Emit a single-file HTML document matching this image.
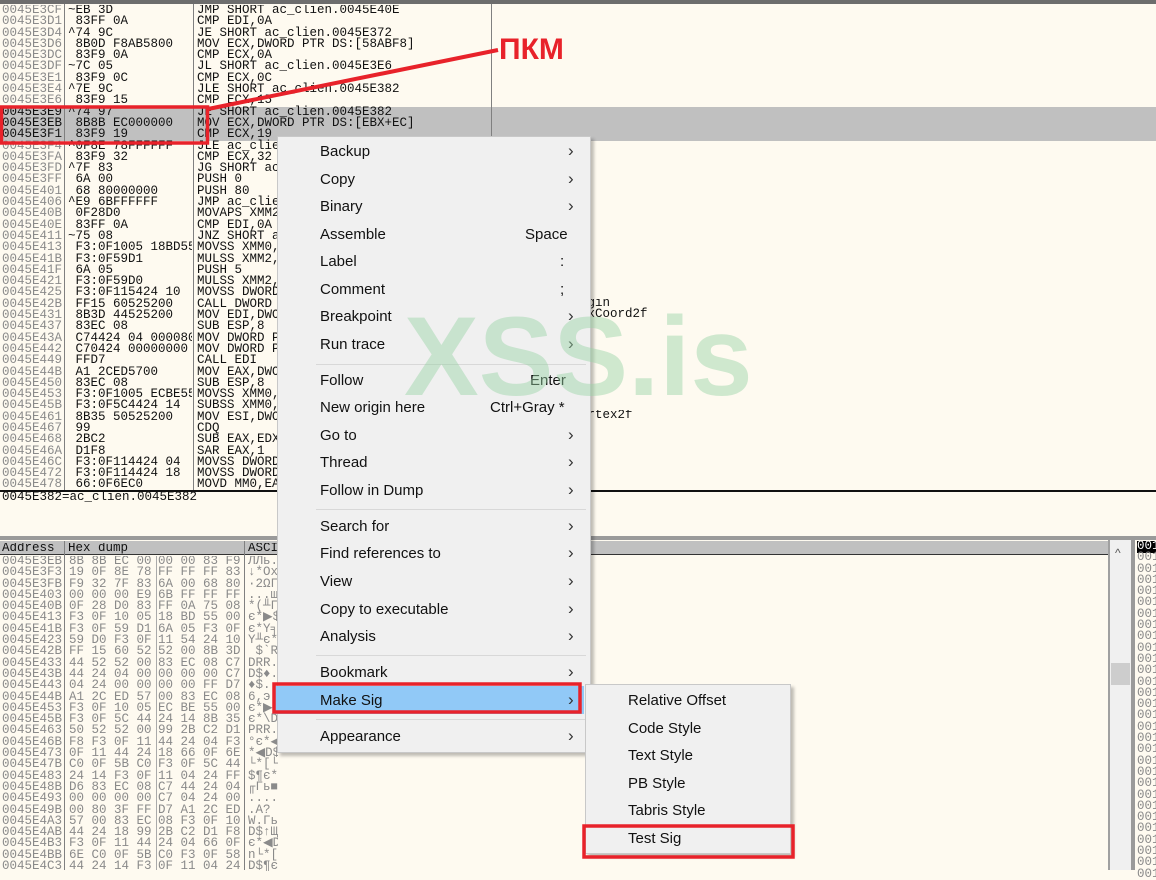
<!DOCTYPE html>
<html><head><meta charset="utf-8"><style>
*{margin:0;padding:0;box-sizing:border-box}
body{width:1156px;height:870px;overflow:hidden;background:#fefaf0;position:relative;font-family:"Liberation Sans",sans-serif}
.a{position:absolute}
.m{font-family:"Liberation Mono",monospace;font-size:12.5px;letter-spacing:0;line-height:11.3px;white-space:pre;overflow:hidden}
.g{color:#8a8a8a}
.k{color:#111}
.vl{position:absolute;width:1px;background:#808080}
.menu{position:absolute;background:#f0f0f0;border:1px solid #c8c8c8;box-shadow:3px 3px 3px rgba(0,0,0,.25)}
.it{position:absolute;left:42px;font-size:15px;color:#111;line-height:18px}
.ar{position:absolute;font-size:17px;color:#333;line-height:18px}
.sep{position:absolute;left:38px;right:4px;height:1px;background:#d8d8d8}
</style></head><body>
<div class="a" style="left:0;top:0;width:1156px;height:4px;background:#6d6d6d"></div>
<div class="a" style="left:0;top:107px;width:1156px;height:34px;background:#c0c0c0"></div>
<div class="vl" style="left:64px;top:4px;height:487px"></div>
<div class="vl" style="left:193px;top:4px;height:487px"></div>
<div class="vl" style="left:491px;top:4px;height:487px"></div>
<div class="a m g" style="left:2px;top:5px;width:62px">0045E3CF
0045E3D1
0045E3D4
0045E3D6
0045E3DC
0045E3DF
0045E3E1
0045E3E4
0045E3E6
<span class="k">0045E3E9
0045E3EB
0045E3F1</span>
0045E3F4
0045E3FA
0045E3FD
0045E3FF
0045E401
0045E406
0045E40B
0045E40E
0045E411
0045E413
0045E41B
0045E41F
0045E421
0045E425
0045E42B
0045E431
0045E437
0045E43A
0045E442
0045E449
0045E44B
0045E450
0045E453
0045E45B
0045E461
0045E467
0045E468
0045E46A
0045E46C
0045E472
0045E478</div>
<div class="a m k" style="left:68px;top:5px;width:124px">~EB 3D
 83FF 0A
^74 9C
 8B0D F8AB5800
 83F9 0A
~7C 05
 83F9 0C
^7E 9C
 83F9 15
^74 97
 8B8B EC000000
 83F9 19
^0F8E 78FFFFFF
 83F9 32
^7F 83
 6A 00
 68 80000000
^E9 6BFFFFFF
 0F28D0
 83FF 0A
~75 08
 F3:0F1005 18BD5500
 F3:0F59D1
 6A 05
 F3:0F59D0
 F3:0F115424 10
 FF15 60525200
 8B3D 44525200
 83EC 08
 C74424 04 0000803F
 C70424 00000000
 FFD7
 A1 2CED5700
 83EC 08
 F3:0F1005 ECBE5500
 F3:0F5C4424 14
 8B35 50525200
 99
 2BC2
 D1F8
 F3:0F114424 04
 F3:0F114424 18
 66:0F6EC0</div>
<div class="a m k" style="left:197px;top:5px;width:292px">JMP SHORT ac_clien.0045E40E
CMP EDI,0A
JE SHORT ac_clien.0045E372
MOV ECX,DWORD PTR DS:[58ABF8]
CMP ECX,0A
JL SHORT ac_clien.0045E3E6
CMP ECX,0C
JLE SHORT ac_clien.0045E382
CMP ECX,15
JE SHORT ac_clien.0045E382
MOV ECX,DWORD PTR DS:[EBX+EC]
CMP ECX,19
JLE ac_clien.0045E382
CMP ECX,32
JG SHORT ac_clien.0045E406
PUSH 0
PUSH 80
JMP ac_clien.0045E376
MOVAPS XMM2,XMM0
CMP EDI,0A
JNZ SHORT ac_clien.0045E41B
MOVSS XMM0,DWORD PTR DS:[55BD18]
MULSS XMM2,XMM1
PUSH 5
MULSS XMM2,XMM0
MOVSS DWORD PTR SS:[ESP+10],XMM2
CALL DWORD PTR DS:[&lt;&amp;OPENGL32.glBegin&gt;]
MOV EDI,DWORD PTR DS:[&lt;&amp;OPENGL32.glTexCoord2f&gt;]
SUB ESP,8
MOV DWORD PTR SS:[ESP+4],3F800000
MOV DWORD PTR SS:[ESP],0
CALL EDI
MOV EAX,DWORD PTR DS:[57ED2C]
SUB ESP,8
MOVSS XMM0,DWORD PTR DS:[55BEEC]
SUBSS XMM0,DWORD PTR SS:[ESP+14]
MOV ESI,DWORD PTR DS:[&lt;&amp;OPENGL32.glVertex2f&gt;]
CDQ
SUB EAX,EDX
SAR EAX,1
MOVSS DWORD PTR SS:[ESP+4],XMM0
MOVSS DWORD PTR SS:[ESP+18],XMM0
MOVD MM0,EAX</div>
<div class="a m k" style="left:580px;top:298px">egin
exCoord2f</div>
<div class="a m k" style="left:580px;top:410px">ertex2f</div>
<div class="a" style="left:0;top:490px;width:1156px;height:2px;background:#111"></div>
<div class="a m k" style="left:2px;top:492px">0045E382=ac_clien.0045E382</div>
<div class="a" style="left:0;top:536px;width:1156px;height:4px;background:#9a9a9a"></div>
<div class="a" style="left:0;top:541px;width:1108px;height:14px;background:#c0c0c0;border-bottom:1px solid #333"></div>
<div class="a m k" style="left:2px;top:543px">Address</div>
<div class="a m k" style="left:68px;top:543px">Hex dump</div>
<div class="a m k" style="left:248px;top:543px">ASCII</div>
<div class="vl" style="left:64px;top:541px;height:329px"></div>
<div class="vl" style="left:244px;top:541px;height:329px"></div>
<div class="vl" style="left:156px;top:556px;height:314px;background:#aaa"></div>
<div class="a" style="left:1108px;top:540px;width:2px;height:330px;background:#a0a0a0"></div>
<div class="a" style="left:1110px;top:540px;width:21px;height:330px;background:#f0f0f0"></div>
<div class="a" style="left:1111px;top:663px;width:19px;height:22px;background:#cdcdcd"></div>
<div class="a" style="left:1115px;top:546px;font-size:12px;color:#555">^</div>
<div class="a" style="left:1131px;top:540px;width:4px;height:330px;background:#9a9a9a"></div>
<div class="a m g" style="left:1137px;top:541px;width:19px"><span style="background:#000;color:#fff">0018</span>
0018
0018
0018
0018
0018
0018
0018
0018
0018
0018
0018
0018
0018
0018
0018
0018
0018
0018
0018
0018
0018
0018
0018
0018
0018
0018
0018
0018
0018</div>
<div class="a m g" style="left:2px;top:556px;width:62px">0045E3EB
0045E3F3
0045E3FB
0045E403
0045E40B
0045E413
0045E41B
0045E423
0045E42B
0045E433
0045E43B
0045E443
0045E44B
0045E453
0045E45B
0045E463
0045E46B
0045E473
0045E47B
0045E483
0045E48B
0045E493
0045E49B
0045E4A3
0045E4AB
0045E4B3
0045E4BB
0045E4C3</div>
<div class="a m g" style="left:69px;top:556px">8B 8B EC 00
19 0F 8E 78
F9 32 7F 83
00 00 00 E9
0F 28 D0 83
F3 0F 10 05
F3 0F 59 D1
59 D0 F3 0F
FF 15 60 52
44 52 52 00
44 24 04 00
04 24 00 00
A1 2C ED 57
F3 0F 10 05
F3 0F 5C 44
50 52 52 00
F8 F3 0F 11
0F 11 44 24
C0 0F 5B C0
24 14 F3 0F
D6 83 EC 08
00 00 00 00
00 80 3F FF
57 00 83 EC
44 24 18 99
F3 0F 11 44
6E C0 0F 5B
44 24 14 F3</div>
<div class="a m g" style="left:158px;top:556px">00 00 83 F9
FF FF FF 83
6A 00 68 80
6B FF FF FF
FF 0A 75 08
18 BD 55 00
6A 05 F3 0F
11 54 24 10
52 00 8B 3D
83 EC 08 C7
00 00 00 C7
00 00 FF D7
00 83 EC 08
EC BE 55 00
24 14 8B 35
99 2B C2 D1
44 24 04 F3
18 66 0F 6E
F3 0F 5C 44
11 04 24 FF
C7 44 24 04
C7 04 24 00
D7 A1 2C ED
08 F3 0F 10
2B C2 D1 F8
24 04 66 0F
C0 F3 0F 58
0F 11 04 24</div>
<div class="a m g" style="left:248px;top:556px;width:30px">ЛЛь.
↓*Ox
·2ΩГ
...ш
*(╨Г
є*▶$
є*Y╕
Y╨є*
 $`R
DRR.
D$♦.
♦$..
6,э
є*▶
є*\D
PRR.
°є*◀
*◀D$
└*[└
$¶є*
╓Гь■
....
.A? 
W.Гь
D$↑Щ
є*◀D
n└*[
D$¶є</div>
<!-- watermark -->
<div class="a" style="left:404px;top:301px;font-weight:bold;font-size:112px;line-height:112px;color:rgba(150,210,165,.45);z-index:5">XSS.is</div>
<!-- main menu -->
<div class="menu" style="left:277px;top:136px;width:314px;height:617px;z-index:3">
<div class="a" style="left:-5px;top:549px;width:311px;height:28px;background:#91c9f7"></div>
<div class="it" style="top:6px">Backup</div><div class="ar" style="left:290px;top:5px">›</div>
<div class="it" style="top:34px">Copy</div><div class="ar" style="left:290px;top:33px">›</div>
<div class="it" style="top:61px">Binary</div><div class="ar" style="left:290px;top:60px">›</div>
<div class="it" style="top:89px">Assemble</div><div class="it" style="left:247px;top:89px">Space</div>
<div class="it" style="top:116px">Label</div><div class="it" style="left:282px;top:116px">:</div>
<div class="it" style="top:144px">Comment</div><div class="it" style="left:282px;top:144px">;</div>
<div class="it" style="top:171px">Breakpoint</div><div class="ar" style="left:290px;top:170px">›</div>
<div class="it" style="top:199px">Run trace</div><div class="ar" style="left:290px;top:198px">›</div>
<div class="sep" style="top:227px"></div>
<div class="it" style="top:235px">Follow</div><div class="it" style="left:252px;top:235px">Enter</div>
<div class="it" style="top:262px">New origin here</div><div class="it" style="left:212px;top:262px">Ctrl+Gray *</div>
<div class="it" style="top:290px">Go to</div><div class="ar" style="left:290px;top:289px">›</div>
<div class="it" style="top:317px">Thread</div><div class="ar" style="left:290px;top:316px">›</div>
<div class="it" style="top:345px">Follow in Dump</div><div class="ar" style="left:290px;top:344px">›</div>
<div class="sep" style="top:372px"></div>
<div class="it" style="top:381px">Search for</div><div class="ar" style="left:290px;top:380px">›</div>
<div class="it" style="top:408px">Find references to</div><div class="ar" style="left:290px;top:407px">›</div>
<div class="it" style="top:436px">View</div><div class="ar" style="left:290px;top:435px">›</div>
<div class="it" style="top:464px">Copy to executable</div><div class="ar" style="left:290px;top:463px">›</div>
<div class="it" style="top:491px">Analysis</div><div class="ar" style="left:290px;top:490px">›</div>
<div class="sep" style="top:518px"></div>
<div class="it" style="top:527px">Bookmark</div><div class="ar" style="left:290px;top:526px">›</div>
<div class="it" style="top:555px">Make Sig</div><div class="ar" style="left:290px;top:554px">›</div>
<div class="sep" style="top:582px"></div>
<div class="it" style="top:591px">Appearance</div><div class="ar" style="left:290px;top:590px">›</div>
</div>
<!-- submenu -->
<div class="menu" style="left:585px;top:684px;width:206px;height:170px;z-index:3">
<div class="it" style="top:7px">Relative Offset</div>
<div class="it" style="top:35px">Code Style</div>
<div class="it" style="top:62px">Text Style</div>
<div class="it" style="top:90px">PB Style</div>
<div class="it" style="top:117px">Tabris Style</div>
<div class="it" style="top:145px">Test Sig</div>
</div>
<!-- red annotations -->
<svg class="a" style="left:0;top:0;z-index:6" width="1156" height="870">
<line x1="208" y1="109" x2="498" y2="50" stroke="#e8222a" stroke-width="4"/>
<rect x="1.5" y="107" width="206" height="36" fill="none" stroke="#e8222a" stroke-width="3.5"/>
<rect x="274" y="684" width="306" height="28" fill="none" stroke="#e8222a" stroke-width="3.5"/>
<rect x="584" y="826" width="209" height="31" fill="none" stroke="#e8222a" stroke-width="3.5"/>
</svg>
<div class="a" style="left:499px;top:33px;font-size:30px;font-weight:bold;color:#e8222a;z-index:6;line-height:34px">ПКМ</div>
</body></html>
